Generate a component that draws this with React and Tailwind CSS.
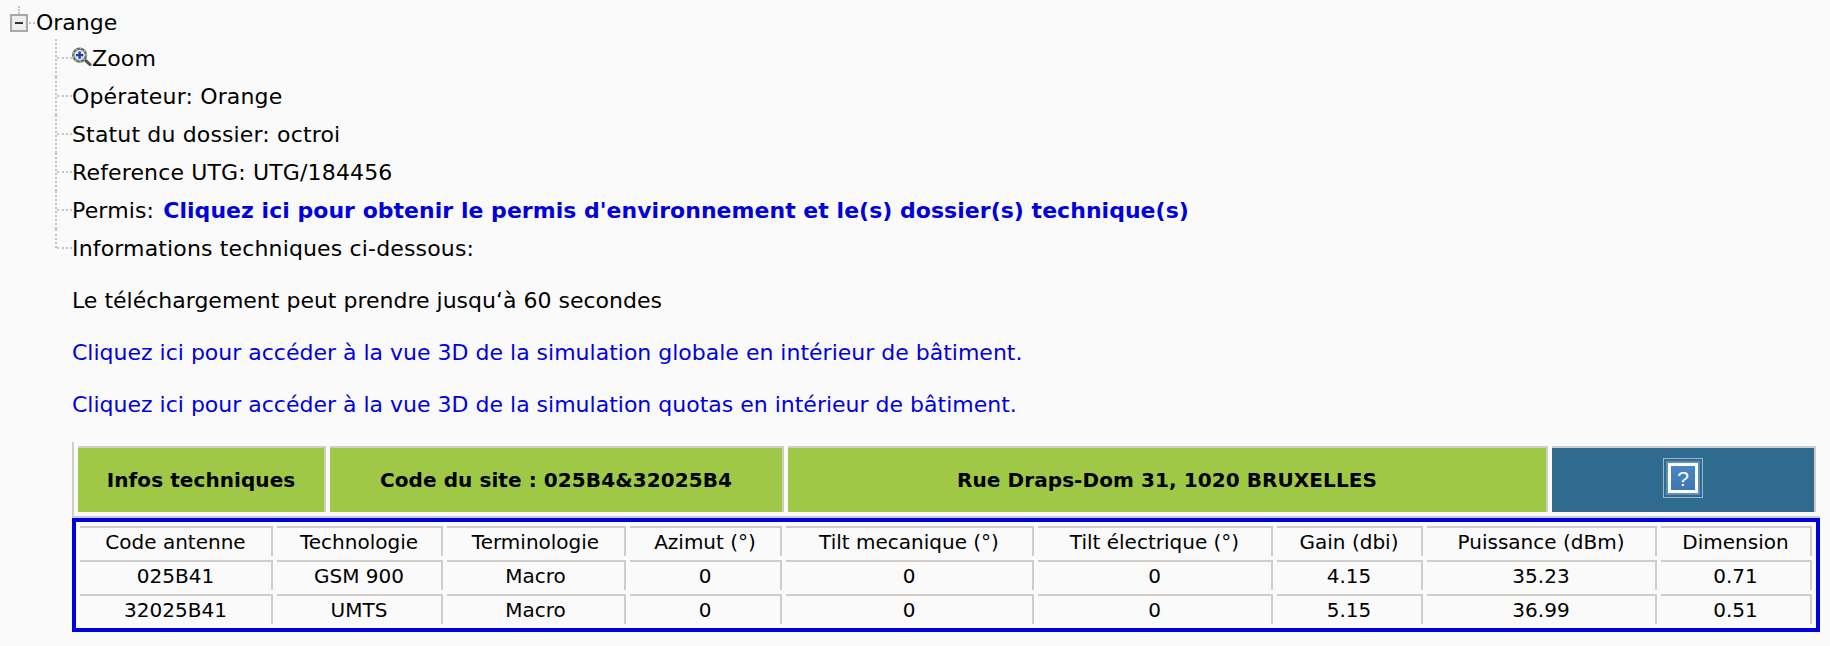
const font = { fontFamily: '"DejaVu Sans", sans-serif' };

function Row({ children, last }) {
  return (
    <div className="relative flex h-[38px] items-center pl-[72px] text-[22px] tracking-[0.15px] text-black">
      <span className={`absolute left-[55px] top-0 w-0 border-l-2 border-dotted border-[#c4c4c4] ${last ? "h-[19px]" : "h-[38px]"}`} />
      <span className="absolute left-[57px] top-[18px] h-0 w-[15px] border-t-2 border-dotted border-[#c4c4c4]" />
      {children}
    </div>
  );
}

const widths = ["w-[193px]", "w-[166px]", "w-[179px]", "w-[152px]", "w-[248px]", "w-[235px]", "w-[146px]", "w-[230px]", "w-[151px]"];
const data = [
  ["Code antenne", "Technologie", "Terminologie", "Azimut (°)", "Tilt mecanique (°)", "Tilt électrique (°)", "Gain (dbi)", "Puissance (dBm)", "Dimension"],
  ["025B41", "GSM 900", "Macro", "0", "0", "0", "4.15", "35.23", "0.71"],
  ["32025B41", "UMTS", "Macro", "0", "0", "0", "5.15", "36.99", "0.51"],
];

export default function App() {
  return (
    <div className="h-[646px] w-[1830px] overflow-hidden bg-[#fafafa]" style={font}>
      <div className="flex h-[39px] items-center pt-[6px] text-[22px] text-black">
        <span className="relative ml-[10px] flex h-[18px] w-[18px] shrink-0 items-center justify-center border-2 border-[#a8a8a8] bg-[#eeeeee]">
          <span className="absolute left-[6px] top-[-10px] h-[8px] w-0 border-l-2 border-dotted border-[#c4c4c4]" />
          <span className="h-[2px] w-[8px] bg-[#333]" />
        </span>
        <span className="mx-[1px] h-0 w-[6px] border-t-2 border-dotted border-[#c4c4c4]" />
        <span>Orange</span>
      </div>
      <Row>
        <svg width="20" height="20" viewBox="0 0 21 20" className="mb-[4px] shrink-0">
          <path d="M13.5 14l5.5 5" stroke="#555" strokeWidth="3.2" strokeLinecap="round" />
          <circle cx="8" cy="9" r="6.8" fill="#d6e4f2" stroke="#6a6a6a" strokeWidth="2.4" />
          <circle cx="8" cy="9" r="6.8" fill="none" stroke="#c8c8c8" strokeWidth="1.2" strokeDasharray="1.5 3" />
          <path d="M4.2 9h7.6M8 5.2v7.6" stroke="#1c3f94" strokeWidth="2.4" />
        </svg>
        <span>Zoom</span>
      </Row>
      <Row>Opérateur: Orange</Row>
      <Row>Statut du dossier: octroi</Row>
      <Row>Reference UTG: UTG/184456</Row>
      <Row>
        <span className="whitespace-pre">Permis: </span>
        <a className="ml-[2px] font-bold tracking-[0.03px] text-[#0000e0]">Cliquez ici pour obtenir le permis d'environnement et le(s) dossier(s) technique(s)</a>
      </Row>
      <Row last>Informations techniques ci-dessous:</Row>
      <div className="pl-[72px] text-[22px] leading-[38px]">
        <p className="mt-[15px] text-black">Le téléchargement peut prendre jusqu‘à 60 secondes</p>
        <p className="mt-[14px] text-[#0000e0]">Cliquez ici pour accéder à la vue 3D de la simulation globale en intérieur de bâtiment.</p>
        <p className="mt-[14px] text-[#0000e0]">Cliquez ici pour accéder à la vue 3D de la simulation quotas en intérieur de bâtiment.</p>
      </div>
      <div className="ml-[72px] mt-[18px] w-[1748px]">
        <div className="flex h-[76px] gap-[4px] border-b-2 border-l-2 border-[#d0ccc8] pl-[4px] pt-[4px] pb-[4px]">
          {[["Infos techniques", "w-[248px]"], ["Code du site : 025B4&32025B4", "w-[454px]"], ["Rue Draps-Dom 31, 1020 BRUXELLES", "w-[760px]"]].map(([t, w]) => (
            <div key={t} className={`flex ${w} shrink-0 items-center justify-center border-t-2 border-r-2 border-[#d0ccc8] bg-[#9fc846] text-[20px] font-bold tracking-[0.08px] text-black`}>{t}</div>
          ))}
          <div className="flex w-[264px] shrink-0 items-center justify-center border-t-2 border-r-2 border-[#d0ccc8] bg-[#2f6b8f]">
            <span className="mb-[4px] flex h-[40px] w-[40px] items-center justify-center border border-[#9ab8cc]">
              <span className="flex h-[34px] w-[34px] items-center justify-center border-2 border-[#5f8fb5]">
                <span className="flex h-[30px] w-[30px] items-center justify-center border-[3px] border-white bg-linear-to-b from-[#4a86c0] to-[#3a78b5] text-[21px] leading-none text-white" style={{ fontFamily: '"Liberation Sans", sans-serif' }}>?</span>
              </span>
            </span>
          </div>
        </div>
        <div className="flex h-[114px] flex-col gap-[4px] border-4 border-[#0000e0] px-[4px] pt-[4px]">
          {data.map((row, i) => (
            <div key={i} className="flex h-[30px] gap-[4px]">
              {row.map((c, j) => (
                <div key={j} className={`${widths[j]} flex shrink-0 items-center justify-center border-t-2 border-r-2 border-[#d0ccc8] text-[20px] text-black`}>{c}</div>
              ))}
            </div>
          ))}
        </div>
      </div>
    </div>
  );
}
